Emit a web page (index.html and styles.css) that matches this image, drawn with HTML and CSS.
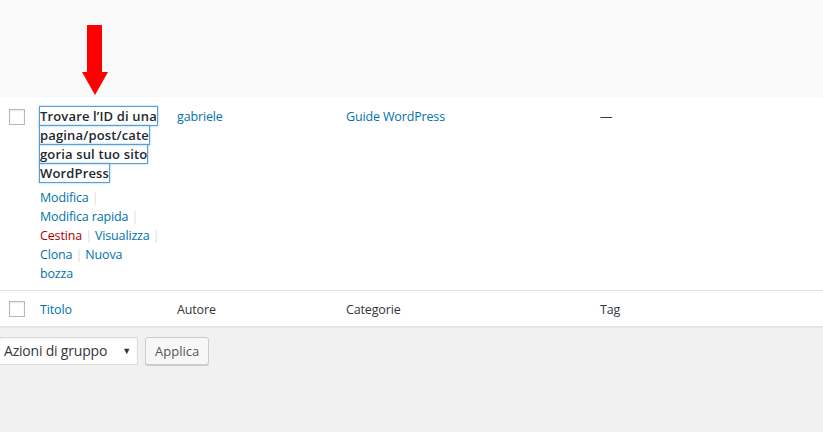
FILE: index.html
```html
<!DOCTYPE html>
<html lang="it">
<head>
  <meta charset="UTF-8">
  <meta name="viewport" content="width=device-width, initial-scale=1.0">
  <title>Articoli</title>
  <link rel="stylesheet" href="styles.css">
</head>
<body>

  <div class="posts-table">
    <div class="row row-alt"></div>

    <div class="row row-post">
      <div class="cell check-col"><span class="checkbox"></span></div>
      <div class="cell title-col">
        <strong><a class="row-title" href="#">Trovare l’ID di una<br>pagina/post/cate<br>goria sul tuo sito<br>WordPress</a></strong>
        <div class="row-actions">
          <a href="#">Modifica</a><span class="sep"> | </span><br>
          <a href="#">Modifica rapida</a><span class="sep"> | </span><br>
          <a href="#" class="trash">Cestina</a><span class="sep"> | </span><a href="#">Visualizza</a><span class="sep"> | </span><br>
          <a href="#">Clona</a><span class="sep"> | </span><a href="#">Nuova</a><br>
          <a href="#">bozza</a>
        </div>
      </div>
      <div class="cell"><a href="#">gabriele</a></div>
      <div class="cell"><a href="#">Guide WordPress</a></div>
      <div class="cell">—</div>
    </div>

    <div class="row row-foot">
      <div class="cell check-col"><span class="checkbox"></span></div>
      <div class="cell title-col"><a href="#">Titolo</a></div>
      <div class="cell">Autore</div>
      <div class="cell">Categorie</div>
      <div class="cell">Tag</div>
    </div>
  </div>

  <div class="tablenav">
    <div class="bulk-select">Azioni di gruppo <span class="caret">▼</span></div>
    <button class="btn">Applica</button>
  </div>

  <svg class="arrow" width="26" height="70" viewBox="0 0 26 70">
    <polygon points="5,0 20,0 20,47 26,47 13,70 0,47 5,47" fill="#ff0000"/>
  </svg>

</body>
</html>
```

FILE: styles.css
```css
body {
  margin: 0;
  background-color: #f1f1f1;
  font-family: "Open Sans", "Noto Sans", sans-serif;
  font-size: 12.5px;
  letter-spacing: -0.15px;
  line-height: 19px;
  color: #32373c;
  position: relative;
  width: 823px;
  height: 432px;
  overflow: hidden;
}

a {
  color: #0073aa;
  text-decoration: none;
}

.posts-table {
  background-color: #fff;
  border-bottom: 1px solid #e5e5e5;
  box-shadow: 0 1px 1px rgba(0, 0, 0, 0.04);
}

.row {
  display: grid;
  grid-template-columns: 30px 137px 169px 254px 1fr;
}

.row-alt {
  height: 97px;
  background-color: #f9f9f9;
}

.cell {
  padding: 10px 10px 7px;
}

.check-col {
  padding: 0;
}

.checkbox {
  display: block;
  width: 14px;
  height: 14px;
  border: 1px solid #b4b9be;
  box-shadow: inset 0 1px 2px rgba(0, 0, 0, 0.1);
  margin-left: 9px;
}

.row-post .checkbox {
  margin-top: 12px;
}

.row-foot {
  border-top: 1px solid #e1e1e1;
}

.row-foot .cell {
  padding: 9px 10px 7px;
}

.row-foot .check-col {
  padding: 0;
}

.row-foot .checkbox {
  margin-top: 10px;
}

.title-col {
  white-space: nowrap;
}

.row-title {
  color: #23282d;
  font-size: 13px;
  font-weight: 600;
  letter-spacing: 0.15px;
  box-shadow: 0 0 0 1px #5b9dd9, 0 0 2px 1px rgba(30, 140, 190, 0.5);
  -webkit-box-decoration-break: clone;
  box-decoration-break: clone;
}

.row-actions {
  padding-top: 5px;
}

.row-actions .sep {
  color: #ddd;
}

.row-actions .trash {
  color: #a00;
}

.tablenav {
  display: flex;
  gap: 7px;
  padding-top: 10px;
}

.bulk-select {
  width: 127px;
  height: 26px;
  line-height: 26px;
  padding-left: 4px;
  padding-right: 6px;
  margin-left: -1px;
  background-color: #fff;
  border: 1px solid #ddd;
  box-shadow: inset 0 1px 2px rgba(0, 0, 0, 0.07);
  color: #32373c;
  font-size: 14px;
  letter-spacing: -0.2px;
  display: flex;
  justify-content: space-between;
}

.caret {
  font-size: 9px;
  color: #333;
}

.btn {
  height: 28px;
  padding: 0 9px;
  font-family: inherit;
  font-size: 13px;
  color: #555;
  background-color: #f7f7f7;
  border: 1px solid #ccc;
  border-radius: 3px;
  box-shadow: 0 1px 0 #ccc;
}

.arrow {
  position: absolute;
  left: 82px;
  top: 25px;
}
```
